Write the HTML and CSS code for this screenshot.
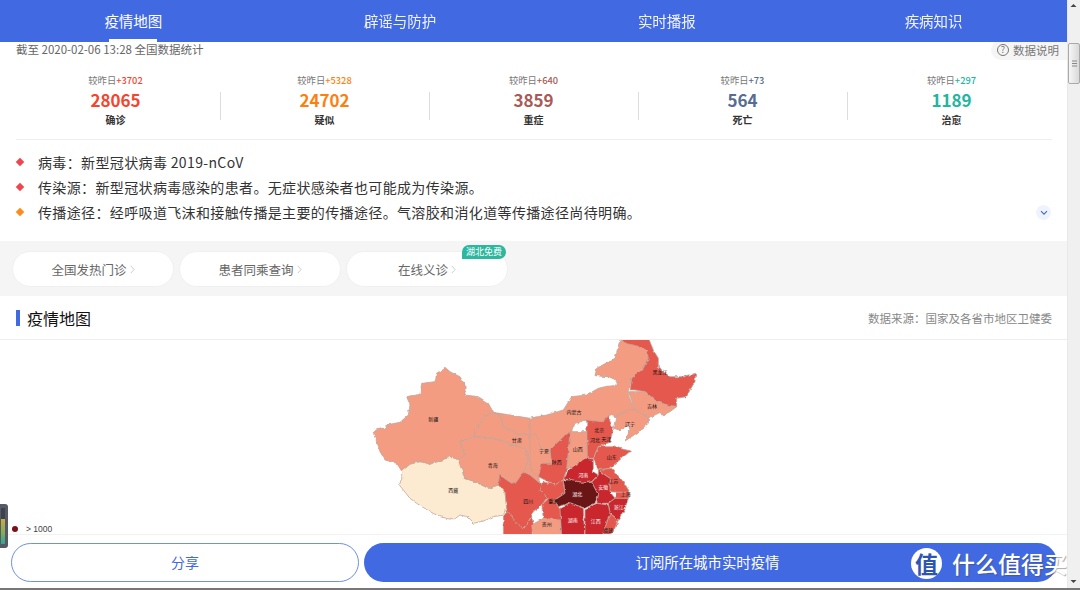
FILE: index.html
```html
<!DOCTYPE html>
<html lang="zh-CN">
<head>
<meta charset="utf-8">
<title>疫情地图</title>
<link rel="stylesheet" href="styles.css">
</head>
<body>
<div class="window">
  <div class="page">
    <nav class="tabs">
      <a class="tab tab-active">疫情地图</a>
      <a class="tab">辟谣与防护</a>
      <a class="tab">实时播报</a>
      <a class="tab">疾病知识</a>
    </nav>
    <main class="content">
      <section class="summary">
        <div class="meta">
          <span class="meta-time">截至 2020-02-06 13:28 全国数据统计</span>
          <span class="meta-help"><span class="help-icon">?</span>数据说明</span>
        </div>
        <div class="stats">
          <div class="stat"><div class="delta">较昨日<b class="c-red">+3702</b></div><div class="num c-red">28065</div><div class="label">确诊</div></div>
          <div class="stat"><div class="delta">较昨日<b class="c-orange">+5328</b></div><div class="num c-orange">24702</div><div class="label">疑似</div></div>
          <div class="stat"><div class="delta">较昨日<b class="c-brown">+640</b></div><div class="num c-brown">3859</div><div class="label">重症</div></div>
          <div class="stat"><div class="delta">较昨日<b class="c-slate">+73</b></div><div class="num c-slate">564</div><div class="label">死亡</div></div>
          <div class="stat"><div class="delta">较昨日<b class="c-teal">+297</b></div><div class="num c-teal">1189</div><div class="label">治愈</div></div>
        </div>
        <ul class="facts">
          <li class="fact"><i class="diamond d-red"></i>病毒：新型冠状病毒 2019-nCoV</li>
          <li class="fact"><i class="diamond d-red"></i>传染源：新型冠状病毒感染的患者。无症状感染者也可能成为传染源。</li>
          <li class="fact"><i class="diamond d-orange"></i>传播途径：经呼吸道飞沫和接触传播是主要的传播途径。气溶胶和消化道等传播途径尚待明确。
            <span class="expand"><svg width="8" height="6" viewBox="0 0 8 6"><path d="M1 1.2l3 3 3-3" fill="none" stroke="#4169e2" stroke-width="1.1"/></svg></span>
          </li>
        </ul>
      </section>
      <section class="links">
        <a class="pill">全国发热门诊<svg class="chev" width="5" height="9" viewBox="0 0 5 9"><path d="M.7.8l3.4 3.7L.7 8.2" fill="none" stroke="#ccc"/></svg></a>
        <a class="pill">患者同乘查询<svg class="chev" width="5" height="9" viewBox="0 0 5 9"><path d="M.7.8l3.4 3.7L.7 8.2" fill="none" stroke="#ccc"/></svg></a>
        <a class="pill">在线义诊<svg class="chev" width="5" height="9" viewBox="0 0 5 9"><path d="M.7.8l3.4 3.7L.7 8.2" fill="none" stroke="#ccc"/></svg><span class="badge">湖北免费</span></a>
      </section>
      <section class="map-section">
        <header class="map-head">
          <h2 class="map-title">疫情地图</h2>
          <span class="map-source">数据来源：国家及各省市地区卫健委</span>
        </header>
        <div class="map">
          <svg class="map-svg" width="1067" height="260" viewBox="0 340 1067 260">
            <defs>
              <filter id="rough" filterUnits="userSpaceOnUse" x="340" y="330" width="380" height="270">
                <feTurbulence type="fractalNoise" baseFrequency=".22" numOctaves="2" seed="4" result="n"/>
                <feDisplacementMap in="SourceGraphic" in2="n" scale="3.2" xChannelSelector="R" yChannelSelector="G"/>
                <feGaussianBlur stdDeviation=".25"/>
              </filter>
            </defs>
            <g filter="url(#rough)">
            <g transform="translate(360,335) scale(.33333)" stroke="#bfa69b" stroke-width="2.4" stroke-linejoin="round">
              <polygon fill="#f49c82" points="40,295 48,285 70,280 90,268 120,262 145,240 150,210 140,185 180,178 185,145 225,140 230,115 255,97 270,110 300,125 315,150 315,180 355,185 385,205 400,232 375,245 345,285 345,305 300,320 315,360 295,375 270,365 240,378 210,388 180,380 150,388 125,408 110,385 75,375 60,350 52,325"/>
              <polygon fill="#fcebd0" points="125,408 150,388 180,380 210,388 240,378 270,365 295,375 315,430 345,440 385,460 415,450 435,470 440,520 430,540 400,545 370,558 340,565 320,545 300,540 280,555 240,545 210,530 170,505 150,490 118,450 125,430"/>
              <polygon fill="#f49c82" points="400,232 450,240 510,250 545,248 545,400 530,395 510,300 470,295 430,275 418,238"/>
              <polygon fill="#f49c82" points="345,305 345,285 375,245 400,232 418,238 430,275 470,295 510,300 530,305 540,335 545,375 530,395 540,445 510,420 490,410 505,375 495,340 470,335 430,320 400,310"/>
              <polygon fill="#f49c82" points="300,320 345,305 400,310 430,320 470,335 495,340 505,375 490,410 470,440 455,445 420,420 415,450 385,460 345,440 315,430 295,375 315,360"/>
              <polygon fill="#e5594e" points="418,420 455,445 470,440 490,410 510,420 540,445 560,462 575,480 560,490 545,510 520,530 505,560 490,580 475,610 430,610 440,560 440,520 435,470 415,450"/>
              <polygon fill="#e5594e" points="430,540 445,530 470,565 490,583 515,545 522,575 510,610 430,610"/>
            </g>
            <g transform="translate(530,335) scale(.33333)" stroke="#bfa69b" stroke-width="2.4" stroke-linejoin="round">
              <polygon fill="#f49c82" points="0,250 50,240 100,225 125,185 170,180 205,160 225,155 260,150 262,140 230,125 195,122 200,100 255,70 270,15 300,20 350,45 355,70 340,100 305,130 295,165 295,180 315,225 295,225 258,245 240,240 215,260 170,255 135,265 125,290 95,310 60,345 35,350 0,300"/>
              <polygon fill="#f49c82" points="0,300 20,300 35,350 60,345 65,385 35,385 25,425 5,410 0,380"/>
              <polygon fill="#e5594e" points="270,8 355,8 370,45 385,70 385,100 420,125 460,125 497,115 495,140 480,165 470,185 440,190 440,215 410,210 380,200 345,170 315,165 300,165 305,130 340,100 355,70 350,45 310,30 285,25"/>
              <polygon fill="#f49c82" points="296,170 345,170 380,200 410,210 440,215 420,230 400,240 385,235 355,250 340,240 315,225"/>
              <polygon fill="#f49c82" points="258,245 295,225 315,225 340,240 355,250 355,265 320,295 285,318 300,285 295,270 270,285 250,280"/>
              <polygon fill="#f49c82" points="120,290 170,290 172,370 140,395 110,402 115,350"/>
              <polygon fill="#e5594e" points="60,345 95,310 120,290 115,350 110,402 100,435 75,450 55,440 25,425 35,385 65,385"/>
              <polygon fill="#e5594e" points="170,255 215,260 235,240 250,285 245,300 240,322 205,335 190,370 172,370"/>
              <polygon fill="#e5594e" points="190,370 205,335 250,335 270,340 302,348 275,370 240,400 205,405"/>
              <polygon fill="#e5594e" points="205,405 245,400 280,440 300,472 260,472 240,470 240,430"/>
              <polygon fill="#c9282f" points="115,405 165,370 190,372 190,410 205,420 185,440 155,445 130,435 100,432"/>
              <polygon fill="#c9282f" points="205,405 225,420 240,430 240,470 255,490 235,505 200,505 205,480 185,442 205,420"/>
              <polygon fill="#e5594e" points="258,472 300,472 295,490 255,490"/>
              <polygon fill="#c9282f" points="255,490 295,490 285,520 265,555 240,535 235,505"/>
              <polygon fill="#e5594e" points="75,450 100,435 105,475 75,495 85,515 95,530 90,560 40,550 35,510 55,490 30,465 40,440"/>
              <polygon fill="#f49c82" points="5,570 40,550 90,555 95,610 10,610"/>
              <polygon fill="#c9282f" points="90,520 120,503 160,520 165,610 95,610"/>
              <polygon fill="#c9282f" points="165,525 200,505 235,510 240,535 215,610 165,610"/>
              <polygon fill="#e5594e" points="240,535 265,555 250,590 225,610 215,610"/>
              <polygon fill="#6b1218" points="100,435 130,435 155,445 185,442 205,480 195,505 165,520 120,503 85,515 75,495 105,475"/>
            </g>
            </g>
            <g class="map-labels" transform="translate(360,335) scale(.33333)">
              <text x="220" y="258">新疆</text><text x="470" y="321">甘肃</text><text x="398" y="395">青海</text><text x="280" y="472">西藏</text><text x="505" y="503">四川</text>
              <text x="900" y="117">黑龙江</text><text x="642" y="238">内蒙古</text><text x="876" y="220">吉林</text><text x="810" y="272">辽宁</text><text x="718" y="290">北京</text><text x="705" y="321">河北</text><text x="739" y="317">天津</text><text x="653" y="347">山西</text><text x="552" y="353">宁夏</text><text x="590" y="387">陕西</text><text x="755" y="373">山东</text><text x="760" y="445">江苏</text><text x="797" y="482">上海</text><text x="580" y="503">重庆</text><text x="560" y="572">贵州</text><text x="744" y="590">福建</text>
              <text class="light" x="670" y="425">河南</text><text class="light" x="730" y="463">安徽</text><text class="light" x="652" y="482">湖北</text><text class="light" x="776" y="523">浙江</text><text class="light" x="638" y="560">湖南</text><text class="light" x="707" y="565">江西</text>
            </g>
          </svg>
          <div class="legend"><i class="legend-dot"></i>&gt; 1000</div>
        </div>
      </section>
    </main>
    <footer class="actions">
      <a class="btn btn-share">分享</a>
      <a class="btn btn-sub">订阅所在城市实时疫情</a>
    </footer>
    <div class="watermark"><span class="wm-logo">值</span><span class="wm-text">什么值得买</span></div>
  </div>
  <div class="scrollbar">
    <svg class="arrow" width="13" height="14" viewBox="0 0 13 14"><path d="M6.5 4l3 3h-6z" fill="#444"/></svg>
    <div class="thumb"><svg width="7" height="7" viewBox="0 0 7 7"><path d="M1 1h5M1 3.5h5M1 6h5" stroke="#888"/></svg></div>
    <div class="track"></div>
    <svg class="arrow" width="13" height="14" viewBox="0 0 13 14"><path d="M6.5 9l3-3h-6z" fill="#444"/></svg>
  </div>
  <div class="meter"><div class="meter-bar"></div></div>
</div>
</body>
</html>
```

FILE: styles.css
```css
* { box-sizing: border-box; }
html, body { margin: 0; height: 100%; overflow: hidden; background: #fff; }
body { font-family: "Noto Sans CJK SC", "Noto Sans", sans-serif; color: #333; }
a { text-decoration: none; color: inherit; }
ul { list-style: none; margin: 0; padding: 0; }
h2 { margin: 0; }

.window { display: flex; height: 590px; border-bottom: 2px solid #777; position: relative; }
.page { flex: 1; min-width: 0; display: flex; flex-direction: column; position: relative; overflow: hidden; }

.tabs { flex: none; height: 42px; display: grid; grid-template-columns: repeat(4, 1fr); background: #4169e2; }
.tab { display: flex; align-items: center; justify-content: center; color: #fff; font-size: 14.5px; padding-bottom: 2px; position: relative; opacity: .92; }
.tab-active { opacity: 1; }
.tab-active::after { content: ""; position: absolute; left: 50%; bottom: 0; width: 48px; height: 3px; margin-left: -24px; background: #fff; }

.content { flex: 1; min-height: 0; overflow: hidden; background: #f5f5f5; }

.summary { height: 199px; background: #fff; padding: 0 15px 0 16px; }
.meta { height: 18px; display: flex; justify-content: space-between; align-items: flex-start; font-size: 11.5px; color: #666; }
.meta-time { line-height: 14px; }
.meta-help { display: flex; align-items: center; gap: 4px; height: 20px; margin: -2px -15px 0 0; padding: 0 8px 0 6px; background: #f5f5f5; border-radius: 10px 0 0 10px; color: #777; }
.help-icon { width: 12px; height: 12px; border: 1px solid #777; border-radius: 50%; font-size: 9px; line-height: 10px; text-align: center; }

.stats { display: grid; grid-template-columns: repeat(5, 209px); margin: 13px 0 0 -5px; height: 66px; }
.stat { display: flex; flex-direction: column; align-items: center; position: relative; }
.stat + .stat::before { content: ""; position: absolute; left: 0; top: 19px; width: 1px; height: 28px; background: #ddd; }
.delta { font-size: 9.3px; line-height: 14px; color: #777; }
.delta b { font-weight: 500; }
.num { font-size: 17px; font-weight: 700; line-height: 25px; }
.label { font-size: 10px; font-weight: 700; line-height: 15px; color: #333; }
.c-red { color: #f5452f; }
.c-orange { color: #ff7f0e; }
.c-brown { color: #a85a55; }
.c-slate { color: #566c93; }
.c-teal { color: #22b5a0; }

.facts { border-top: 1px solid #eee; padding-top: 9px; width: 1036px; }
.fact { display: flex; align-items: center; height: 25px; font-size: 14px; color: #333; position: relative; letter-spacing: .36px; }
.diamond { width: 6px; height: 6px; margin: 0 15px 0 1px; transform: rotate(45deg); flex: none; }
.d-red { background: #f0444f; }
.d-orange { background: #ff8a1a; }
.expand { position: absolute; right: 1px; top: 6px; width: 15px; height: 15px; border-radius: 50%; background: #eef3fd; display: flex; align-items: center; justify-content: center; }

.links { height: 55px; display: flex; gap: 5px; padding: 10px 0 0 12px; }
.pill { width: 162px; height: 36px; background: #fff; border-radius: 18px; display: flex; align-items: center; justify-content: center; gap: 3px; font-size: 12.5px; color: #666; position: relative; border: 1px solid #f0f0f0; }
.chev { flex: none; }
.badge { position: absolute; right: 1px; top: -7px; height: 14px; padding: 0 4px; border-radius: 7px 7px 7px 0; background: #2cb79f; color: #fff; font-size: 9px; line-height: 14px; }

.map-section { background: #fff; }
.map-head { height: 44px; display: flex; align-items: center; justify-content: space-between; padding: 0 15px 0 16px; border-bottom: 1px solid #eee; }
.map-title { font-size: 16px; font-weight: 400; color: #111; border-left: 4px solid #4169e2; padding-left: 7px; line-height: 16px; }
.map-source { font-size: 11.5px; color: #888; }
.map { position: relative; height: 194px; overflow: hidden; }
.map-svg { display: block; }
.map-labels text { font-family: "Noto Sans CJK SC", sans-serif; font-size: 15px; fill: #111; text-anchor: middle; }
.map-labels text.light { fill: #fff; }
.legend { position: absolute; left: 12px; bottom: 0; display: flex; align-items: center; gap: 8px; font-size: 8.5px; line-height: 10px; color: #444; font-family: "Liberation Sans", sans-serif; }
.legend-dot { width: 6px; height: 6px; border-radius: 50%; background: #7a1018; }

.actions { flex: none; height: 54px; background: #fff; display: flex; gap: 5px; padding: 8px 10px 7px 11px; border-top: 1px solid #f2f2f2; position: relative; }
.btn { height: 39px; border-radius: 20px; display: flex; align-items: center; justify-content: center; font-size: 14px; padding-bottom: 2px; }
.btn-share { width: 348px; border: 1px solid #6f8fe8; color: #4169e2; }
.btn-sub { flex: 1; background: #4169e2; color: #fff; font-size: 14.4px; padding-right: 6px; }

.watermark { position: absolute; left: 911px; top: 546px; display: flex; align-items: center; gap: 10px; white-space: nowrap; pointer-events: none; }
.wm-logo { width: 31px; height: 31px; border-radius: 50%; background: #fff; color: #2f55b4; font-size: 23px; font-weight: 700; line-height: 30px; text-align: center; }
.wm-text { color: #fff; font-size: 23px; font-weight: 500; text-shadow: 1px 1px 1px rgba(70, 70, 70, .45); }

.scrollbar { flex: none; width: 13px; background: #f0f0f0; display: flex; flex-direction: column; border-left: 1px solid #e8e8e8; }
.arrow { flex: none; display: block; margin-left: -1px; }
.thumb { flex: none; height: 41px; margin-top: 29px; background: linear-gradient(90deg, #f6f6f6, #d9d9d9); border: 1px solid #aaa; border-radius: 2px; display: flex; align-items: center; justify-content: center; }
.track { flex: 1; }

.meter { position: absolute; left: 0; top: 504px; width: 8px; height: 44px; background: #555a66; border-radius: 0 3px 3px 0; padding: 4px 3px 4px 1px; }
.meter-bar { height: 100%; background: linear-gradient(180deg, #3d424c 0, #3d424c 30%, #c9ad3a 31%, #7fae5a 70%, #2fa596 100%); }
```
